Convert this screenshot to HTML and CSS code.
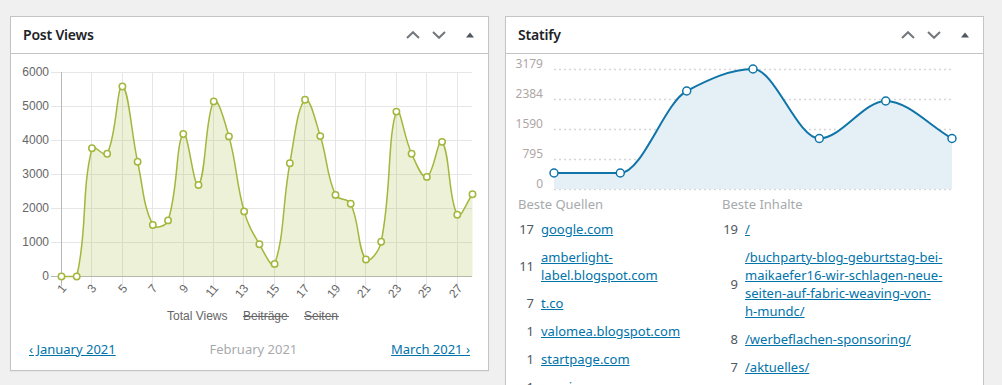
FILE: index.html
```html
<!DOCTYPE html>
<html lang="de">
<head>
<meta charset="utf-8">
<title>Dashboard</title>
<link rel="stylesheet" href="styles.css">
</head>
<body>
<div class="dash">
  <div class="postbox">
    <div class="postbox-header">
      <h2 class="hndle">Post Views</h2>
      <div class="handle-actions">
        <span class="hbtn hbtn-move"><svg width="14" height="8" viewBox="0 0 14 8"><path d="M1 7 L7 1.2 L13 7" class="chev"/></svg></span>
        <span class="hbtn hbtn-move"><svg width="14" height="8" viewBox="0 0 14 8"><path d="M1 1 L7 6.8 L13 1" class="chev"/></svg></span>
        <span class="hbtn hbtn-toggle"><svg width="8" height="6" viewBox="0 0 8 6"><path d="M0 5.5 L4 0.5 L8 5.5 Z" class="tri"/></svg></span>
      </div>
    </div>
    <div class="inside">
      <svg class="pv-chart" width="477" height="276" viewBox="11 54 477 276">
        <g class="grid">
          <line x1="51" y1="72.5" x2="472" y2="72.5"/>
          <line x1="51" y1="106.5" x2="472" y2="106.5"/>
          <line x1="51" y1="140.5" x2="472" y2="140.5"/>
          <line x1="51" y1="174.5" x2="472" y2="174.5"/>
          <line x1="51" y1="208.5" x2="472" y2="208.5"/>
          <line x1="51" y1="242.5" x2="472" y2="242.5"/>
          <line x1="91.5" y1="72" x2="91.5" y2="286"/>
          <line x1="122.5" y1="72" x2="122.5" y2="286"/>
          <line x1="152.5" y1="72" x2="152.5" y2="286"/>
          <line x1="183.5" y1="72" x2="183.5" y2="286"/>
          <line x1="213.5" y1="72" x2="213.5" y2="286"/>
          <line x1="243.5" y1="72" x2="243.5" y2="286"/>
          <line x1="274.5" y1="72" x2="274.5" y2="286"/>
          <line x1="304.5" y1="72" x2="304.5" y2="286"/>
          <line x1="335.5" y1="72" x2="335.5" y2="286"/>
          <line x1="365.5" y1="72" x2="365.5" y2="286"/>
          <line x1="396.5" y1="72" x2="396.5" y2="286"/>
          <line x1="426.5" y1="72" x2="426.5" y2="286"/>
          <line x1="457.5" y1="72" x2="457.5" y2="286"/>
        </g>
        <g class="axis">
          <line x1="61.5" y1="72" x2="61.5" y2="286"/>
          <line x1="51" y1="276.5" x2="472" y2="276.5"/>
        </g>
        <path id="pv-area" class="pv-area" d=""/>
        <path id="pv-line" class="pv-line" d=""/>
        <g id="pv-points" class="pv-points"></g>
        <g class="ylabels">
          <text x="49" y="72">6000</text>
          <text x="49" y="106">5000</text>
          <text x="49" y="140">4000</text>
          <text x="49" y="174">3000</text>
          <text x="49" y="208">2000</text>
          <text x="49" y="242">1000</text>
          <text x="49" y="276">0</text>
        </g>
        <g class="xlabels">
          <text transform="translate(64 286) rotate(-50)">1</text>
          <text transform="translate(94 286) rotate(-50)">3</text>
          <text transform="translate(125 286) rotate(-50)">5</text>
          <text transform="translate(155 286) rotate(-50)">7</text>
          <text transform="translate(186 286) rotate(-50)">9</text>
          <text transform="translate(216 286) rotate(-50)">11</text>
          <text transform="translate(246 286) rotate(-50)">13</text>
          <text transform="translate(277 286) rotate(-50)">15</text>
          <text transform="translate(307 286) rotate(-50)">17</text>
          <text transform="translate(338 286) rotate(-50)">19</text>
          <text transform="translate(368 286) rotate(-50)">21</text>
          <text transform="translate(399 286) rotate(-50)">23</text>
          <text transform="translate(429 286) rotate(-50)">25</text>
          <text transform="translate(460 286) rotate(-50)">27</text>
        </g>
        <g class="legend">
          <text x="167" y="316">Total Views</text>
          <text x="243" y="316" class="off">Beiträge</text>
          <text x="304" y="316" class="off">Seiten</text>
          <line x1="243" y1="316.5" x2="289" y2="316.5" class="strike"/>
          <line x1="304" y1="316.5" x2="339" y2="316.5" class="strike"/>
        </g>
      </svg>
      <div class="pv-nav">
        <a href="#">‹ January 2021</a>
        <span class="cur">February 2021</span>
        <a href="#">March 2021 ›</a>
      </div>
    </div>
  </div>

  <div class="postbox">
    <div class="postbox-header">
      <h2 class="hndle">Statify</h2>
      <div class="handle-actions">
        <span class="hbtn hbtn-move"><svg width="14" height="8" viewBox="0 0 14 8"><path d="M1 7 L7 1.2 L13 7" class="chev"/></svg></span>
        <span class="hbtn hbtn-move"><svg width="14" height="8" viewBox="0 0 14 8"><path d="M1 1 L7 6.8 L13 1" class="chev"/></svg></span>
        <span class="hbtn hbtn-toggle"><svg width="8" height="6" viewBox="0 0 8 6"><path d="M0 5.5 L4 0.5 L8 5.5 Z" class="tri"/></svg></span>
      </div>
    </div>
    <div class="inside">
      <svg class="st-chart" width="477" height="141" viewBox="506 54 477 141">
        <g class="dots">
          <line x1="554" y1="69.5" x2="952" y2="69.5"/>
          <line x1="554" y1="99.5" x2="952" y2="99.5"/>
          <line x1="554" y1="129.5" x2="952" y2="129.5"/>
          <line x1="554" y1="159.5" x2="952" y2="159.5"/>
          <line x1="554" y1="189.5" x2="952" y2="189.5"/>
        </g>
        <path id="st-area" class="st-area" d=""/>
        <path id="st-line" class="st-line" d=""/>
        <g id="st-points" class="st-points"></g>
        <g class="st-ylabels">
          <text x="543" y="63">3179</text>
          <text x="543" y="93">2384</text>
          <text x="543" y="123">1590</text>
          <text x="543" y="153">795</text>
          <text x="543" y="183">0</text>
        </g>
      </svg>
      <div class="st-tables">
        <div class="st-col st-col-ref">
          <p class="sub">Beste Quellen</p>
          <table>
            <tr><td class="num">17</td><td class="lnk"><a href="#">google.com</a></td></tr>
            <tr><td class="num">11</td><td class="lnk"><a href="#">amberlight-label.blogspot.com</a></td></tr>
            <tr><td class="num">7</td><td class="lnk"><a href="#">t.co</a></td></tr>
            <tr><td class="num">1</td><td class="lnk"><a href="#">valomea.blogspot.com</a></td></tr>
            <tr><td class="num">1</td><td class="lnk"><a href="#">startpage.com</a></td></tr>
            <tr><td class="num">1</td><td class="lnk"><a href="#">ecosia.org</a></td></tr>
          </table>
        </div>
        <div class="st-col st-col-tgt">
          <p class="sub">Beste Inhalte</p>
          <table>
            <tr><td class="num">19</td><td class="lnk"><a href="#">/</a></td></tr>
            <tr><td class="num">9</td><td class="lnk"><a href="#">/buchparty-blog-geburtstag-bei-maikaefer16-wir-schlagen-neue-seiten-auf-fabric-weaving-von-<span class="nobr">h-mundc/</span></a></td></tr>
            <tr><td class="num">8</td><td class="lnk"><a href="#">/werbeflachen-sponsoring/</a></td></tr>
            <tr><td class="num">7</td><td class="lnk"><a href="#">/aktuelles/</a></td></tr>
          </table>
        </div>
      </div>
    </div>
  </div>
</div>
<script src="script.js"></script>
</body>
</html>
```

FILE: styles.css
```css
html, body {
  margin: 0;
  padding: 0;
  background: #f0f0f1;
  font-family: "Noto Sans", "Open Sans", sans-serif;
  font-size: 13px;
  color: #3c434a;
}

.dash {
  display: flex;
  align-items: flex-start;
  gap: 16px;
  padding: 16px 0 0 10px;
}

.postbox {
  width: 477px;
  flex: 0 0 477px;
  background: #fff;
  border: 1px solid #c3c4c7;
  box-shadow: 0 1px 1px rgba(0, 0, 0, 0.04);
}

.postbox-header {
  display: flex;
  align-items: center;
  justify-content: space-between;
  height: 36px;
  border-bottom: 1px solid #c3c4c7;
}

.hndle {
  margin: 0;
  padding: 0 12px;
  font-size: 14px;
  font-weight: 600;
  line-height: 1.4;
  color: #1d2327;
  letter-spacing: -0.2px;
}

.handle-actions {
  display: flex;
  height: 36px;
}

.hbtn {
  display: flex;
  align-items: center;
  justify-content: center;
  height: 36px;
}

.hbtn-move { width: 26px; }
.hbtn-toggle { width: 36px; }

.chev {
  fill: none;
  stroke: #72777c;
  stroke-width: 2;
}

.tri { fill: #50575e; }

.inside { padding: 0; }

.pv-chart, .st-chart { display: block; }

.grid line {
  stroke: #e6e6e6;
  stroke-width: 1;
}

.axis line {
  stroke: #b8b8b8;
  stroke-width: 1;
}

.pv-area { fill: rgba(164, 184, 60, 0.2); stroke: none; }
.pv-line { fill: none; stroke: #a4b63c; stroke-width: 1.5; }
.pv-points circle { fill: #fff; stroke: #a4b63c; stroke-width: 1.5; }

.ylabels text {
  font-family: "Liberation Sans", Arial, sans-serif;
  font-size: 12px;
  fill: #666;
  text-anchor: end;
  dominant-baseline: central;
}

.xlabels text {
  font-family: "Liberation Sans", Arial, sans-serif;
  font-size: 12px;
  fill: #666;
  text-anchor: end;
  dominant-baseline: central;
}

.legend text {
  font-family: "Liberation Sans", Arial, sans-serif;
  font-size: 12px;
  fill: #666;
  dominant-baseline: central;
}

.legend .strike { stroke: #666; stroke-width: 1; }

.pv-nav {
  display: flex;
  justify-content: space-between;
  align-items: center;
  padding: 10px 18px 12px;
  line-height: 18px;
  font-size: 13px;
}

.pv-nav a { color: #0073aa; text-decoration: underline; }
.pv-nav .cur { color: #a7aaad; }

.dots line {
  stroke: #d6d6d6;
  stroke-width: 1.5;
  stroke-dasharray: 2 3;
}

.st-area { fill: #e4eff6; stroke: none; }
.st-line { fill: none; stroke: #0f74a8; stroke-width: 2; }
.st-points circle { fill: #fff; stroke: #0f74a8; stroke-width: 1.5; }

.st-ylabels text {
  font-size: 12px;
  fill: #b0a6a6;
  text-anchor: end;
  dominant-baseline: central;
}

.st-tables {
  display: flex;
  padding: 0 12px;
}

.st-col-ref { width: 204px; flex: 0 0 204px; }
.st-col-tgt { flex: 1; }

.sub {
  margin: 0 0 2px;
  line-height: 18px;
  color: #a7aaad;
}

.st-tables table {
  border-collapse: collapse;
}

.st-tables td {
  padding: 5px 0;
  line-height: 18px;
  vertical-align: middle;
}

.st-tables td.num {
  width: 16px;
  padding-right: 7px;
  text-align: right;
  color: #50575e;
  white-space: nowrap;
}

.st-col-ref td.lnk { width: 160px; }
.st-col-tgt td.lnk { width: 204px; }

.st-tables a {
  color: #0073aa;
  text-decoration: underline;
}

.nobr { white-space: nowrap; }
```

FILE: script.js
```js
(function () {
  var NS = "http://www.w3.org/2000/svg";

  function f(n) { return Math.round(n * 100) / 100; }

  function chartjsCurve(pts, t, minY, maxY) {
    var cps = pts.map(function (p, i) {
      var prev = pts[i - 1] || p, next = pts[i + 1] || p;
      var d01 = Math.hypot(p[0] - prev[0], p[1] - prev[1]);
      var d12 = Math.hypot(next[0] - p[0], next[1] - p[1]);
      var s01 = d01 / (d01 + d12), s12 = d12 / (d01 + d12);
      if (isNaN(s01)) s01 = 0;
      if (isNaN(s12)) s12 = 0;
      var fa = t * s01, fb = t * s12;
      var pv = [p[0] - fa * (next[0] - prev[0]), p[1] - fa * (next[1] - prev[1])];
      var nx = [p[0] + fb * (next[0] - prev[0]), p[1] + fb * (next[1] - prev[1])];
      pv[1] = Math.min(maxY, Math.max(minY, pv[1]));
      nx[1] = Math.min(maxY, Math.max(minY, nx[1]));
      return { prev: pv, next: nx };
    });
    var d = "M" + f(pts[0][0]) + " " + f(pts[0][1]);
    for (var i = 1; i < pts.length; i++) {
      var a = cps[i - 1].next, b = cps[i].prev, p = pts[i];
      d += " C" + f(a[0]) + " " + f(a[1]) + " " + f(b[0]) + " " + f(b[1]) + " " + f(p[0]) + " " + f(p[1]);
    }
    return d;
  }

  function monotoneCurve(pts) {
    var n = pts.length, dxs = [], ms = [], ds = [];
    for (var i = 0; i < n - 1; i++) {
      dxs[i] = pts[i + 1][0] - pts[i][0];
      ms[i] = (pts[i + 1][1] - pts[i][1]) / dxs[i];
    }
    ds[0] = ms[0];
    ds[n - 1] = ms[n - 2];
    for (i = 1; i < n - 1; i++) {
      if (ms[i] === 0 || ms[i - 1] === 0 || (ms[i - 1] > 0) !== (ms[i] > 0)) {
        ds[i] = 0;
      } else {
        ds[i] = 3 * (dxs[i - 1] + dxs[i]) /
          ((2 * dxs[i] + dxs[i - 1]) / ms[i - 1] + (dxs[i] + 2 * dxs[i - 1]) / ms[i]);
      }
    }
    var d = "M" + f(pts[0][0]) + " " + f(pts[0][1]);
    for (i = 0; i < n - 1; i++) {
      var h = dxs[i] / 3;
      d += " C" + f(pts[i][0] + h) + " " + f(pts[i][1] + ds[i] * h) + " " +
        f(pts[i + 1][0] - h) + " " + f(pts[i + 1][1] - ds[i + 1] * h) + " " +
        f(pts[i + 1][0]) + " " + f(pts[i + 1][1]);
    }
    return d;
  }

  function dots(groupId, pts, r) {
    var g = document.getElementById(groupId);
    pts.forEach(function (p) {
      var c = document.createElementNS(NS, "circle");
      c.setAttribute("cx", f(p[0]));
      c.setAttribute("cy", f(p[1]));
      c.setAttribute("r", r);
      g.appendChild(c);
    });
  }

  /* Post Views (Chart.js style) */
  var views = [0, 0, 3770, 3610, 5590, 3375, 1515, 1650, 4190, 2690, 5150, 4120, 1915, 950,
    370, 3330, 5200, 4130, 2400, 2140, 500, 1020, 4850, 3610, 2930, 3960, 1815, 2420];
  var step = 411 / 27;
  var pv = views.map(function (v, i) { return [61.5 + i * step, 276.5 - v * 0.034]; });
  var pvLine = chartjsCurve(pv, 0.4, 72, 276.5);
  document.getElementById("pv-line").setAttribute("d", pvLine);
  document.getElementById("pv-area").setAttribute("d",
    pvLine + " L" + f(pv[pv.length - 1][0]) + " 276.5 L" + f(pv[0][0]) + " 276.5 Z");
  dots("pv-points", pv, 3.2);

  /* Statify (Chartist monotone) */
  var st = [[554, 173], [620.3, 173], [686.7, 91], [753, 69], [819.3, 138.5], [885.7, 101], [952, 138.5]];
  var stLine = monotoneCurve(st);
  document.getElementById("st-line").setAttribute("d", stLine);
  document.getElementById("st-area").setAttribute("d",
    stLine + " L952 189 L554 189 Z");
  dots("st-points", st, 4);
})();
```
